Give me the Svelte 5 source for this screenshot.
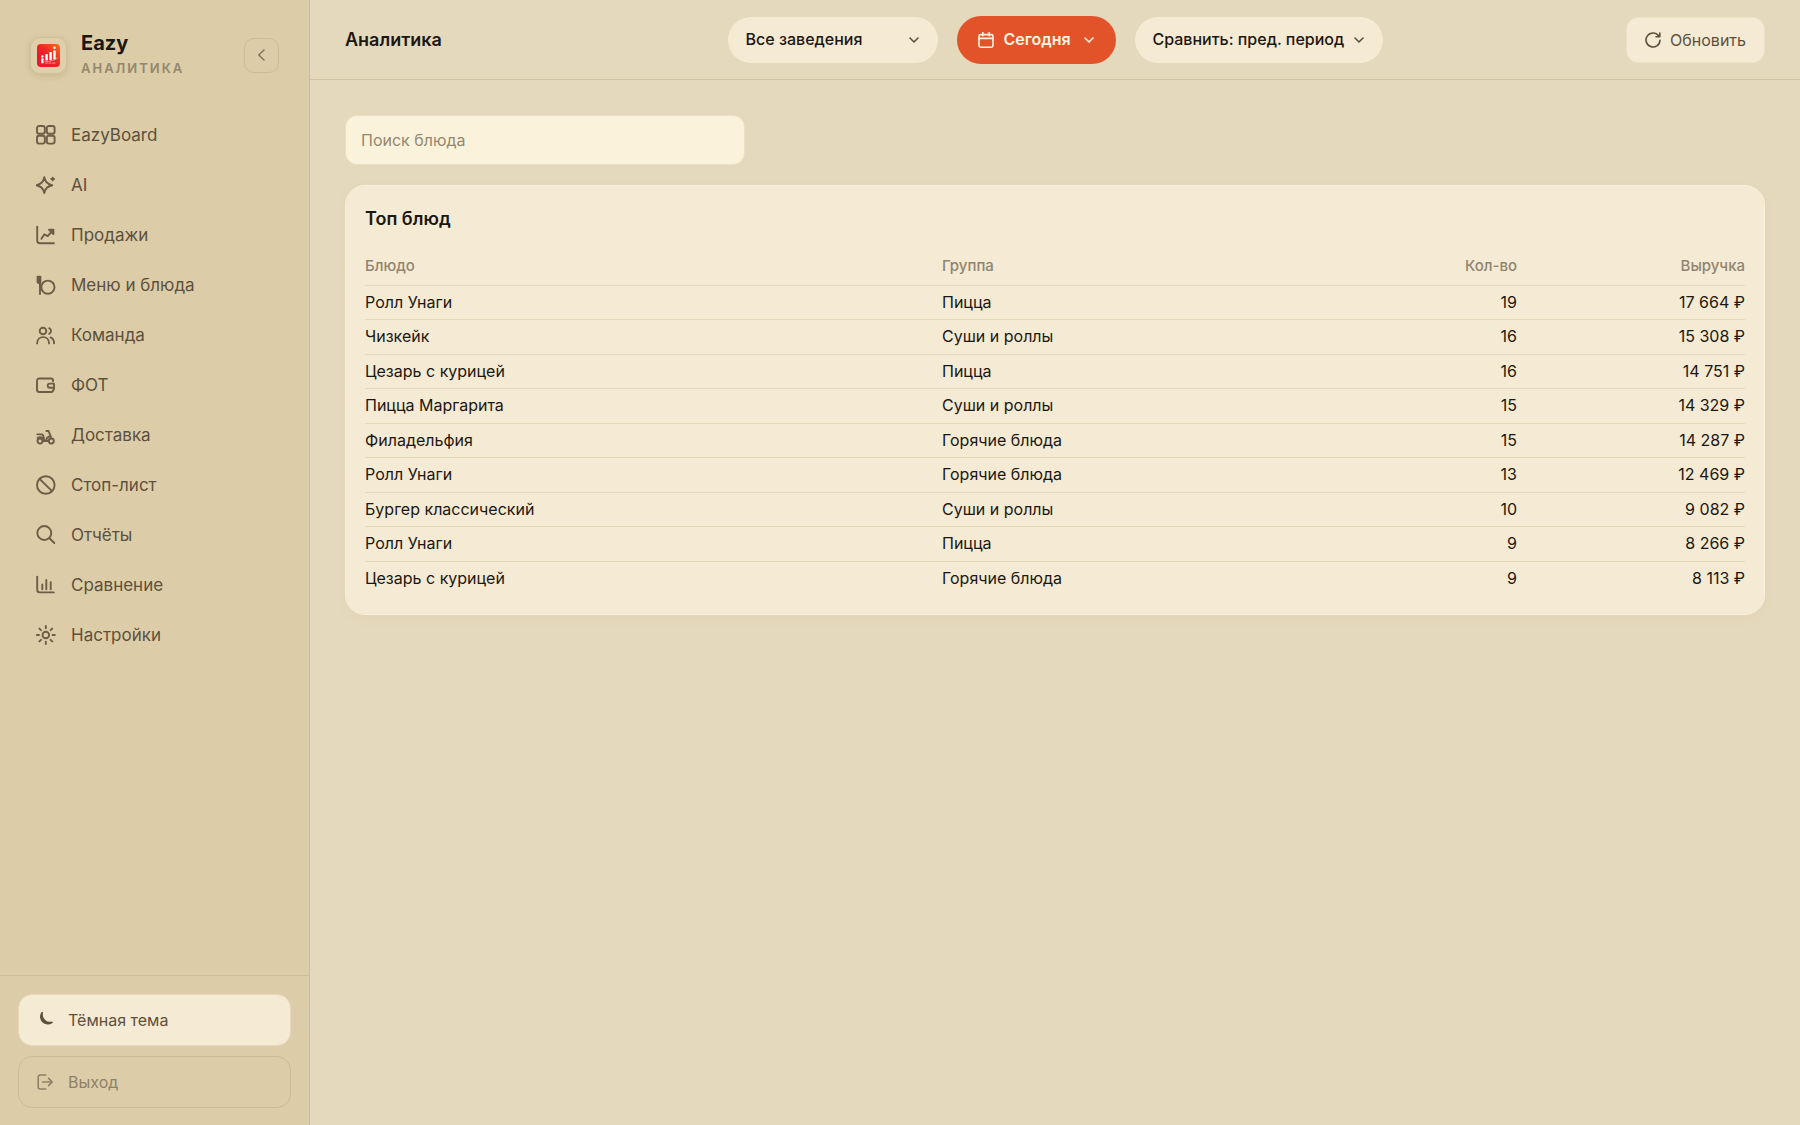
<script>
    const menu = [
        { id: "board", label: "EazyBoard" },
        { id: "ai", label: "AI" },
        { id: "sales", label: "Продажи" },
        { id: "dishes", label: "Меню и блюда" },
        { id: "team", label: "Команда" },
        { id: "payroll", label: "ФОТ" },
        { id: "delivery", label: "Доставка" },
        { id: "stop", label: "Стоп-лист" },
        { id: "reports", label: "Отчёты" },
        { id: "compare", label: "Сравнение" },
        { id: "settings", label: "Настройки" },
    ];

    const dishes = [
        { name: "Ролл Унаги", group: "Пицца", count: 19, revenue: 17664 },
        { name: "Чизкейк", group: "Суши и роллы", count: 16, revenue: 15308 },
        { name: "Цезарь с курицей", group: "Пицца", count: 16, revenue: 14751 },
        { name: "Пицца Маргарита", group: "Суши и роллы", count: 15, revenue: 14329 },
        { name: "Филадельфия", group: "Горячие блюда", count: 15, revenue: 14287 },
        { name: "Ролл Унаги", group: "Горячие блюда", count: 13, revenue: 12469 },
        { name: "Бургер классический", group: "Суши и роллы", count: 10, revenue: 9082 },
        { name: "Ролл Унаги", group: "Пицца", count: 9, revenue: 8266 },
        { name: "Цезарь с курицей", group: "Горячие блюда", count: 9, revenue: 8113 },
    ];

    let query = $state("");

    let filtered = $derived(
        dishes.filter((d) => d.name.toLowerCase().includes(query.trim().toLowerCase()))
    );

    // 17664 -> "17 664 ₽"
    const money = (n) => String(n).replace(/\B(?=(\d{3})+$)/g, "\u00a0") + "\u00a0₽";
</script>

<svelte:head>
    <title>Eazy Аналитика</title>
</svelte:head>

{#snippet chevron()}
    <svg class="chevron" viewBox="0 0 12 12" aria-hidden="true">
        <path d="M2 4l4 4 4-4" />
    </svg>
{/snippet}

{#snippet icon(id)}
    <svg class="icon" viewBox="0 0 20 20" aria-hidden="true">
        {#if id === "board"}
            <rect x="1" y="1" width="7.8" height="7.8" rx="2" />
            <rect x="10.8" y="1" width="7.8" height="7.8" rx="2" />
            <rect x="1" y="10.8" width="7.8" height="7.8" rx="2" />
            <rect x="10.8" y="10.8" width="7.8" height="7.8" rx="2" />
        {:else if id === "ai"}
            <path d="M8.3 2.2c.9 4.7 3.2 7.1 7.9 8-4.7.9-7 3.2-7.9 7.9-.9-4.7-3.2-7-7.9-7.9 4.7-.9 7-3.3 7.9-8z" />
            <path d="M16.7 2.6v2.8M15.3 4h2.8" />
        {:else if id === "sales"}
            <path d="M1.2 1.6v14a2.7 2.7 0 0 0 2.7 2.7h14" />
            <path d="M5.4 13.7l3-4.4 3.3 1.8 5-5.6" />
            <path d="M13 4.7h4.4v4.4z" />
        {:else if id === "dishes"}
            <path class="solid" d="M1.6 1.8h2.8V7.2L3.8 8H2.2L1.6 7.2z" />
            <path d="M4 7v12" />
            <circle cx="11.9" cy="12.2" r="6.6" />
        {:else if id === "team"}
            <circle cx="7" cy="6" r="3.3" />
            <path d="M1.1 18.4c.1-8.4 11.9-8.4 12 0" />
            <path d="M13.2 3.2c2.4 1.2 2.4 4.5 0 5.6M14.6 12.4c2.2.9 3.4 3 3.5 6" />
        {:else if id === "payroll"}
            <path d="M17 6.2V5.3a1.8 1.8 0 0 0-1.8-1.8H3.2A2.2 2.2 0 0 0 1 5.7v9.1A2.2 2.2 0 0 0 3.2 17h12A1.8 1.8 0 0 0 17 15.2" />
            <path d="M18 8.6h-4.2a2.1 2.1 0 0 0 0 4.2H18zM18 8.6v6" />
        {:else if id === "delivery"}
            <circle cx="4" cy="16" r="2.5" />
            <circle cx="15.3" cy="16" r="2.5" />
            <path d="M1.4 9.4H6c1.5.6 1.9 2.4 1.9 5M1.6 12.8c2-.9 3.6-.8 4.8.2M10.4 6h2.2l2.7 7.2" />
            <path d="M6.8 16h5.8M10 15.6c.3-2.3 1.6-3.6 3.4-4.1" />
        {:else if id === "stop"}
            <circle cx="9.8" cy="10" r="8.8" />
            <path d="M3.6 3.8l12.4 12.4" />
        {:else if id === "reports"}
            <circle cx="8.3" cy="8" r="7" />
            <path d="M13.3 13l5 5" />
        {:else if id === "compare"}
            <path d="M1.2 1.6v13.2a2.6 2.6 0 0 0 2.6 2.6h14" />
            <path d="M6.3 9.4v4.8M10.3 5v9.2M14.7 7.2v7" />
        {:else if id === "settings"}
            <circle cx="9.8" cy="10" r="3.3" />
            <path d="M9.8 1v2.2M9.8 16.8V19M.8 10H3M16.6 10h2.2M3.4 3.6L5 5.2M14.6 14.8l1.6 1.6M16.2 3.6l-1.6 1.6M5 14.8l-1.6 1.6" />
        {/if}
    </svg>
{/snippet}

<div class="app">
    <aside>
        <div class="brand">
            <div class="logo">
                <svg viewBox="0 0 23 23" aria-hidden="true">
                    <defs>
                        <linearGradient id="logo-fill" x1="0" y1="1" x2="1" y2="0">
                            <stop offset="0" stop-color="#ee0f35" />
                            <stop offset="0.5" stop-color="#ee2226" />
                            <stop offset="1" stop-color="#f5701c" />
                        </linearGradient>
                    </defs>
                    <rect width="23" height="23" rx="4" fill="url(#logo-fill)" />
                    <g fill="#fff">
                        <circle cx="5.4" cy="12.4" r="1.2" />
                        <rect x="4.2" y="14.3" width="2.4" height="5" rx="0.6" />
                        <rect x="8.3" y="10" width="2.5" height="6.4" rx="0.6" />
                        <rect x="12.3" y="8" width="2.5" height="8.2" rx="0.6" />
                        <rect x="16.2" y="6.4" width="2.5" height="9.2" rx="0.6" />
                        <circle cx="17.5" cy="3.8" r="1.2" />
                    </g>
                    <path d="M8 17.4c5 .4 9-.8 12.4-3.4" fill="none" stroke="#fbc4b8" stroke-width="0.6" />
                    <path d="M8.4 19h2M12 19h2M15.6 19h2.4" fill="none" stroke="#f9998c" stroke-width="1.2" />
                </svg>
            </div>
            <div class="brand-text">
                <strong>Eazy</strong>
                <span>АНАЛИТИКА</span>
            </div>
            <button class="collapse" aria-label="Свернуть меню">
                <svg viewBox="0 0 16 16" aria-hidden="true">
                    <path d="M10 3L4.8 8l5.2 5" />
                </svg>
            </button>
        </div>

        <nav>
            {#each menu as item}
                <a href="#{item.id}">
                    {@render icon(item.id)}
                    {item.label}
                </a>
            {/each}
        </nav>

        <div class="bottom">
            <button class="theme">
                <svg viewBox="0 0 16 16" aria-hidden="true">
                    <path class="solid" d="M5.2 0.6A7 7 0 0 0 15 10.4 8.2 8.2 0 0 1 5.2 0.6z" />
                </svg>
                Тёмная тема
            </button>
            <button class="logout">
                <svg viewBox="0 0 16 16" aria-hidden="true">
                    <path d="M8.8 1H3.2a2 2 0 0 0-2 2v10a2 2 0 0 0 2 2h5.6M5.6 8H15M11.6 4.4L15.2 8l-3.6 3.6" />
                </svg>
                Выход
            </button>
        </div>
    </aside>

    <div class="main">
        <header>
            <h1>Аналитика</h1>

            <div class="filters">
                <div class="pill venue">
                    <select aria-label="Заведение">
                        <option>Все заведения</option>
                    </select>
                    {@render chevron()}
                </div>
                <div class="pill period">
                    <svg class="calendar" viewBox="0 0 16 16" aria-hidden="true">
                        <rect x="1" y="2.6" width="14" height="12.6" rx="1.6" />
                        <path d="M1 6.4h14M4.8 0.6v3.2M11.2 0.6v3.2" />
                    </svg>
                    <select aria-label="Период">
                        <option>Сегодня</option>
                    </select>
                    {@render chevron()}
                </div>
                <div class="pill versus">
                    <select aria-label="Сравнение">
                        <option>Сравнить: пред. период</option>
                    </select>
                    {@render chevron()}
                </div>
            </div>

            <button class="refresh">
                <svg viewBox="0 0 16 16" aria-hidden="true">
                    <path d="M13.6 3.8A7 7 0 1 0 15 8.4M14.8 1v3.8H11" />
                </svg>
                Обновить
            </button>
        </header>

        <main>
            <input class="search" type="search" placeholder="Поиск блюда" aria-label="Поиск блюда" bind:value={query} />

            <section class="card">
                <h2>Топ блюд</h2>
                <table>
                    <thead>
                        <tr>
                            <th>Блюдо</th>
                            <th class="group">Группа</th>
                            <th class="num count">Кол-во</th>
                            <th class="num sum">Выручка</th>
                        </tr>
                    </thead>
                    <tbody>
                        {#each filtered as dish}
                            <tr>
                                <td>{dish.name}</td>
                                <td>{dish.group}</td>
                                <td class="num">{dish.count}</td>
                                <td class="num">{money(dish.revenue)}</td>
                            </tr>
                        {/each}
                    </tbody>
                </table>
            </section>
        </main>
    </div>
</div>

<style>
    :global(body) {
        margin: 0;
        background: #e5d9bd;
    }

    .app {
        display: flex;
        min-height: 100vh;
        font-family: Inter, "Noto Sans", sans-serif;
        font-size: 16px;
        line-height: 24px;
        color: #1c1710;
    }

    button,
    select,
    input {
        font: inherit;
        color: inherit;
        box-sizing: border-box;
    }

    button {
        cursor: pointer;
    }

    svg {
        flex: none;
        width: 16px;
        height: 16px;
        fill: none;
        stroke: currentColor;
        stroke-width: 1.6;
        stroke-linecap: round;
        stroke-linejoin: round;
    }

    .solid {
        fill: currentColor;
    }

    aside {
        flex: none;
        box-sizing: border-box;
        width: 310px;
        display: flex;
        flex-direction: column;
        background: #dccca7;
        border-right: 1px solid #cbbc9c;
    }

    .brand {
        display: flex;
        align-items: center;
        gap: 14px;
        padding: 30px 30px 0;
    }

    .logo {
        display: grid;
        place-items: center;
        box-sizing: border-box;
        width: 37px;
        height: 37px;
        border: 1px solid #d0c09c;
        border-radius: 10px;
        background: #dfcfab;
        box-shadow: 0 2px 6px rgba(90, 70, 30, 0.15);
    }

    .logo svg {
        width: 23px;
        height: 23px;
        stroke: none;
    }

    .brand-text {
        display: flex;
        flex: 1;
        flex-direction: column;
    }

    .brand-text strong {
        font-size: 20px;
        line-height: 26px;
    }

    .brand-text span {
        font-size: 13px;
        font-weight: 600;
        letter-spacing: 2px;
        color: #94876c;
    }

    .collapse {
        display: grid;
        place-items: center;
        width: 35px;
        height: 35px;
        padding: 0;
        border: 1px solid #cbbc99;
        border-radius: 10px;
        background: transparent;
        color: #857860;
    }

    nav {
        display: flex;
        flex: 1;
        flex-direction: column;
        gap: 4px;
        padding: 32px 18px 0;
    }

    nav a {
        display: flex;
        align-items: center;
        gap: 15px;
        height: 46px;
        padding: 0 18px;
        border-radius: 12px;
        color: #5d503d;
        font-size: 17px;
        text-decoration: none;
    }

    .icon {
        width: 20px;
        height: 20px;
        stroke-width: 1.9;
        color: #6d5d47;
    }

    .bottom {
        display: flex;
        flex-direction: column;
        gap: 10px;
        padding: 18px 18px 17px;
        border-top: 1px solid #cfbf9c;
    }

    .bottom button {
        display: flex;
        align-items: center;
        gap: 15px;
        height: 52px;
        padding: 0 18px;
        border: 1px solid #cbbc99;
        border-radius: 14px;
        background: transparent;
        color: #8f8168;
    }

    .bottom .theme {
        background: #f5ead3;
        border-color: #e6d9bb;
        color: #5d503d;
    }

    .main {
        flex: 1;
        min-width: 0;
    }

    header {
        display: grid;
        grid-template-columns: 1fr auto 1fr;
        align-items: center;
        box-sizing: border-box;
        height: 80px;
        padding: 0 35px;
        border-bottom: 1px solid #d0c2a3;
    }

    h1,
    h2 {
        margin: 0;
        font-size: 18px;
        font-weight: 600;
        line-height: 24px;
    }

    .filters {
        display: flex;
        align-items: center;
        gap: 19px;
    }

    .pill {
        display: flex;
        align-items: center;
        box-sizing: border-box;
        height: 46px;
        padding: 0 18px;
        border-radius: 24px;
        background: #f5ead3;
        font-weight: 500;
    }

    .pill select {
        flex: 1;
        min-width: 0;
        padding: 0 0 2px;
        border: 0;
        outline: 0;
        appearance: none;
        background: transparent;
    }

    .venue {
        width: 210px;
    }

    .versus {
        width: 248px;
    }

    .period {
        gap: 10px;
        width: 159px;
        height: 48px;
        padding: 0 21px;
        background: #e2532a;
        color: #fdf3e0;
        font-weight: 600;
    }

    .chevron {
        width: 12px;
        height: 12px;
        pointer-events: none;
        color: #5d503d;
    }

    .period .chevron {
        color: #fdf3e0;
    }

    .refresh {
        display: flex;
        align-items: center;
        justify-self: end;
        gap: 9px;
        height: 46px;
        padding: 0 18px;
        border: 1px solid #ece0c6;
        border-radius: 12px;
        background: #f5ead3;
        color: #5d503d;
    }

    main {
        padding: 35px;
    }

    .search {
        display: block;
        width: 400px;
        height: 50px;
        padding: 0 15px;
        border: 1px solid #eadfc4;
        border-radius: 12px;
        outline: 0;
        background: #fbf2db;
    }

    .search::placeholder {
        color: #93886f;
        opacity: 1;
    }

    .card {
        margin-top: 20px;
        padding: 21px 19px 19px;
        border: 1px solid #f8eed9;
        border-radius: 20px;
        background: #f5ead3;
        box-shadow: 0 4px 14px rgba(120, 100, 50, 0.03);
    }

    table {
        width: 100%;
        margin-top: 16px;
        border-collapse: collapse;
        table-layout: fixed;
    }

    th,
    td {
        padding: 4px 0 5px;
        border-bottom: 1px solid #e3d7bc;
        text-align: left;
    }

    th {
        padding: 7px 0;
        font-size: 15px;
        font-weight: 500;
        color: #8f8570;
    }

    tbody tr:nth-child(even) td {
        padding-bottom: 6px;
    }

    tbody tr:last-child td {
        border-bottom: 0;
    }

    .group {
        width: 350px;
    }

    .count {
        width: 225px;
    }

    .sum {
        width: 228px;
    }

    th.num,
    td.num {
        text-align: right;
    }
</style>
